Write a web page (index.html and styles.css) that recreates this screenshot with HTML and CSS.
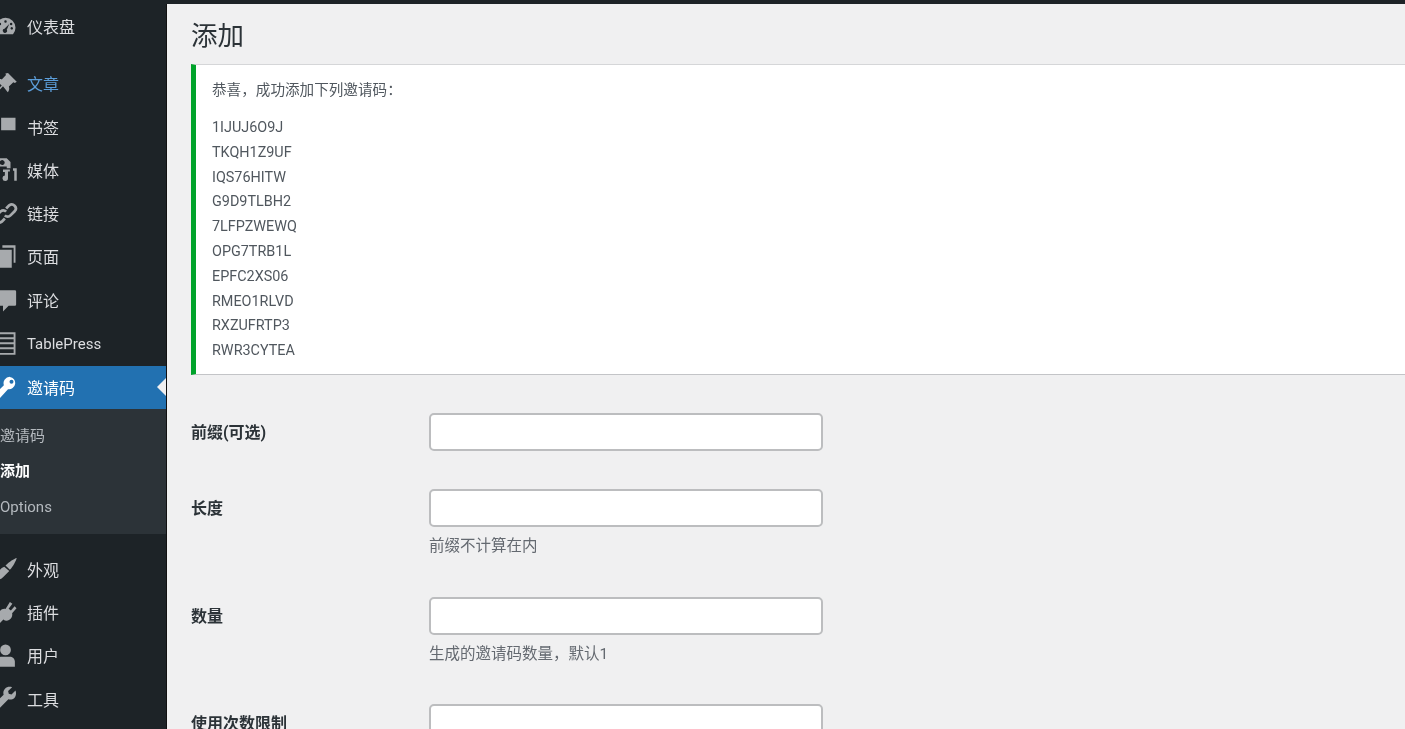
FILE: index.html
```html
<!DOCTYPE html>
<html lang="zh-CN">
<head>
<meta charset="utf-8">
<title>添加邀请码</title>
<link rel="stylesheet" href="styles.css">
</head>
<body>
<div class="topbar"></div>
<div class="layout">
  <nav class="sidebar">
    <a class="item first"><svg class="ico" viewBox="0 0 20 20"><path fill-rule="evenodd" d="M10 3a8 8 0 0 0-8 8c0 2 .7 3.800 2 5.200h12A8 8 0 0 0 18 11a8 8 0 0 0-8-8zm0 2a1 1 0 1 1 0 2 1 1 0 0 1 0-2zM5.500 7a1 1 0 1 1 0 2 1 1 0 0 1 0-2zm9 0a1 1 0 1 1 0 2 1 1 0 0 1 0-2zM4 11.500a1 1 0 1 1 0-.1zm12 0a1 1 0 1 1 0-.1zM13 8l-2 4.500a1.700 1.700 0 1 1-1.800-.8z"/></svg><span>仪表盘</span></a>
    <a class="item blue"><svg class="ico" viewBox="0 0 20 20"><path d="M12 1.500l7 7-1.500 1-1.200-.6-3.600 3.400c.6 1.800.2 3.400-.9 4.700L8 12.200 2.500 18l-1-1L7 11.500 2.300 7.600c1.200-1.100 2.900-1.500 4.700-.9L10.400 3.100 9.900 2z"/></svg><span>文章</span></a>
    <a class="item"><svg class="ico" viewBox="0 0 20 20"><path d="M3 3h2.500v16H3zM6.500 3H18v10H6.500z"/></svg><span>书签</span></a>
    <a class="item"><svg class="ico" viewBox="0 0 20 20"><path fill-rule="evenodd" d="M3 1h8l3 3v5h-3V7.500H5V10H3zM8 2.500a2 2 0 1 0 0 3.800 2 2 0 0 0 0-3.800zM16 9h3v10h-2v-8h-1zM8 10h5.500v1.500H12V17a2.200 2.200 0 1 1-2.500-2.200V12H8z"/></svg><span>媒体</span></a>
    <a class="item"><svg class="ico" viewBox="0 0 20 20"><path d="M10.500 6l2.500-2.500a3.200 3.200 0 0 1 4.500 4.500l-3.500 3.500a3.200 3.200 0 0 1-4.500 0M9.500 14L7 16.500A3.200 3.200 0 0 1 2.500 12L6 8.500a3.200 3.200 0 0 1 4.500 0" fill="none" stroke="currentColor" stroke-width="2.200"/></svg><span>链接</span></a>
    <a class="item"><svg class="ico" viewBox="0 0 20 20"><path d="M7.500 1H18v14h-1.500V3H7.500zM3 4.500h12V19H3z"/></svg><span>页面</span></a>
    <a class="item"><svg class="ico" viewBox="0 0 20 20"><path d="M3 2.500h14.500a1 1 0 0 1 1 1V14a1 1 0 0 1-1 1h-5L8 19.500V15H3a1 1 0 0 1-1-1V3.500a1 1 0 0 1 1-1z"/></svg><span>评论</span></a>
    <a class="item"><svg class="ico" viewBox="0 0 20 20"><path fill-rule="evenodd" d="M2 1h16v18H2zM3.500 2.500V5h13V2.500zm0 4V9h13V6.500zm0 4V13h13v-2.500zm0 4v3h13v-3z"/></svg><span class="latin">TablePress</span></a>
    <a class="item active"><svg class="ico" viewBox="0 0 20 20"><path fill-rule="evenodd" d="M13.500 1.500a5 5 0 0 0-4.800 6.600L1.500 15.500V19H5l7-7.600a5 5 0 1 0 1.500-9.900zm1.300 2.300a1.600 1.600 0 1 1 0 3.200 1.600 1.600 0 0 1 0-3.200z"/></svg><span>邀请码</span><i class="notch"></i></a>
    <div class="submenu">
      <a class="sub">邀请码</a>
      <a class="sub current">添加</a>
      <a class="sub">Options</a>
    </div>
    <a class="item"><svg class="ico" viewBox="0 0 20 20"><path d="M19 1.500c-2 .5-6 3-9 6l3.500 3.500c2.800-3 5-7.500 5.500-9.500zM9 8.500L7 9.500 2 15c1.200 0 1.800.7 1.800 1.800L2 18.500c2.500.8 4.500 0 6-1.500l5-5z"/></svg><span>外观</span></a>
    <a class="item"><svg class="ico" viewBox="0 0 20 20"><path d="M13.500 1.500l2 1.500-3 4 1.800 1.300 3-3.300 1.500 1.500-3.500 4c.5 2.300-.5 4.500-2.500 5.500-1.700.9-3.300.6-4.500-.5L5 19l-3-1.500 3-3.500c-.7-1.400-.6-3.300.5-5 1.100-1.400 2.800-2.200 4.500-1.800z"/></svg><span>插件</span></a>
    <a class="item"><svg class="ico" viewBox="0 0 20 20"><circle cx="10" cy="5.500" r="4.300"/><path d="M2.500 19v-4c0-2.500 2-4 4-4h7c2 0 4 1.500 4 4v4z"/></svg><span>用户</span></a>
    <a class="item"><svg class="ico" viewBox="0 0 20 20"><path d="M18 3.500l-3.200 3.200-2.200-.5-.5-2.200L15.300 1c-2-.8-4.300-.3-5.700 1.100-1.300 1.300-1.600 3.200-1.100 4.800L1.500 14c-1 1-1 2.700 0 3.800s2.800 1 3.800 0l7-7.200c1.600.5 3.500.2 4.800-1.100 1.400-1.400 1.700-4 .9-6z"/></svg><span>工具</span></a>
  </nav>
  <main class="main">
    <h1 class="title">添加</h1>
    <section class="notice">
      <p class="intro">恭喜，成功添加下列邀请码：</p>
      <ul class="codes">
        <li>1IJUJ6O9J</li>
        <li>TKQH1Z9UF</li>
        <li>IQS76HITW</li>
        <li>G9D9TLBH2</li>
        <li>7LFPZWEWQ</li>
        <li>OPG7TRB1L</li>
        <li>EPFC2XS06</li>
        <li>RMEO1RLVD</li>
        <li>RXZUFRTP3</li>
        <li>RWR3CYTEA</li>
      </ul>
    </section>
    <form class="form">
      <div class="row"><label class="label">前缀(可选)</label><div class="field"><input class="input" type="text"></div></div>
      <div class="row"><label class="label">长度</label><div class="field"><input class="input" type="text"><p class="desc">前缀不计算在内</p></div></div>
      <div class="row"><label class="label">数量</label><div class="field"><input class="input" type="text"><p class="desc">生成的邀请码数量，默认1</p></div></div>
      <div class="row"><label class="label">使用次数限制</label><div class="field"><input class="input" type="text"></div></div>
    </form>
  </main>
</div>
</body>
</html>
```
FILE: styles.css
```css
* { box-sizing: border-box; }
html, body { margin: 0; height: 729px; overflow: hidden; }
body {
  background: #f0f0f1;
  color: #50575e;
  font-family: Roboto, "Noto Sans CJK SC", sans-serif;
  font-size: 14.4px;
  filter: blur(0.6px);
}
.topbar { height: 4px; background: #1d2327; }
.layout { display: flex; height: 725px; }
.sidebar {
  width: 167px;
  flex: none;
  background: #1d2327;
  color: #dcdde0;
  padding-top: 0.6px;
  font-size: 16px;
  border-right: 1px solid #111;
}
.latin { font-size: 15px; padding-top: 1px; }
.item {
  display: flex;
  align-items: center;
  gap: 9px;
  height: 43.3px;
  margin-left: -7px;
  position: relative;
}
.first { margin-bottom: 13.7px; }
.ico { width: 25px; height: 25px; flex: none; fill: #a7aaad; color: #a7aaad; }
.blue { color: #5b9dd9; }
.active { background: #2271b1; color: #fff; margin-left: 0; margin-top: 1px; }
.active .ico { fill: #fff; margin-left: -7px; }
.notch {
  position: absolute;
  right: 0;
  top: 50%;
  margin-top: -9px;
  border: 9px solid transparent;
  border-right-color: #f0f0f1;
  border-left-width: 0;
}
.submenu {
  background: #2c3338;
  height: 125px;
  padding-top: 10px;
  margin-bottom: 13.300px;
}
.sub { display: block; height: 35.5px; line-height: 35.5px; font-size: 15px; color: #b4b9be; }
.current { color: #fff; font-weight: 700; }
.main { flex: 1; padding-left: 24px; min-width: 0; }
.title {
  margin: 0;
  height: 60px;
  line-height: 63px;
  font-size: 26.5px;
  font-weight: 400;
  color: #2c3338;
}
.notice {
  background: #fff;
  border-left: 5px solid #00a32a;
  border-top: 1px solid #d5d6d8;
  border-bottom: 1px solid #c3c4c7;
  height: 311px;
  padding: 13px 0 0 16px;
}
.intro { margin: 0 0 13.500px; line-height: 24.600px; font-size: 14.6px; }
.codes { list-style: none; margin: 0; padding: 0; }
.codes li { line-height: 24.800px; }
.form { padding-top: 38px; }
.row { display: flex; margin-bottom: 38px; }
.label {
  width: 238px;
  height: 38px;
  flex: none;
  line-height: 40px;
  font-size: 16px;
  font-weight: 700;
  color: #2c3338;
}
.field { width: 394px; }
.input {
  display: block;
  width: 394px;
  height: 38px;
  background: #fff;
  border: 2px solid #bcbdbf;
  border-radius: 5px;
}
.desc { margin: 8px 0 0; line-height: 23.500px; font-size: 15.500px; color: #646970; }
```
